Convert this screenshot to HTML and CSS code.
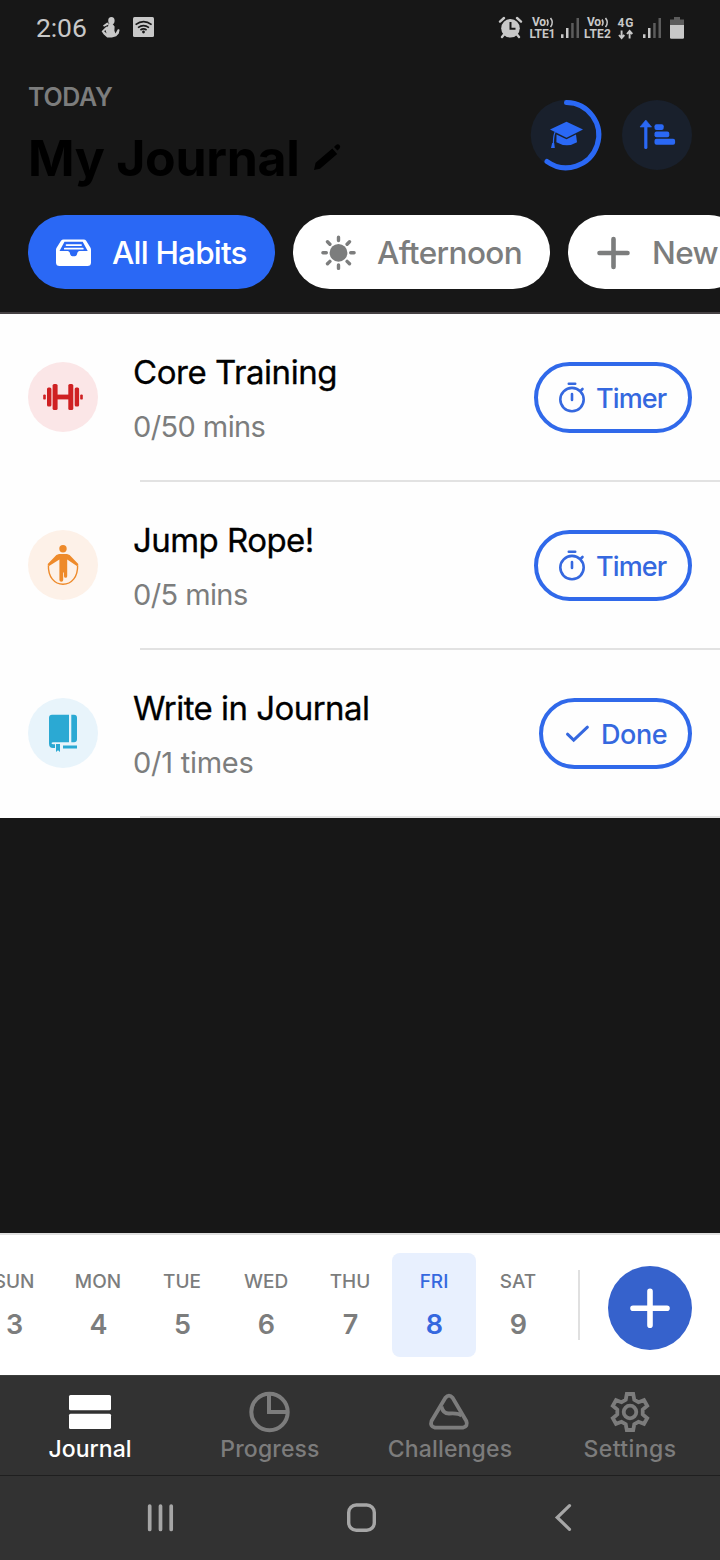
FILE: index.html
```html
<!DOCTYPE html>
<html lang="en">
<head>
<meta charset="utf-8">
<title>My Journal</title>
<link rel="stylesheet" href="styles.css">
</head>
<body>
<div class="app">
  <div class="status">
    <span class="clock">2:06</span>
    <svg class="status-left" width="60" height="56" viewBox="98 0 60 56">
      <g fill="#c8c8c8">
        <ellipse cx="111.4" cy="20.8" rx="3.2" ry="3.7"/>
        <path d="M103 25.600l4.200-3 1.600.8-.6 1.400-4.200 2zM108.600 24h4l2 2.400-.2 4.400 1 2.600 2.600-4.400 1.600.8-.8 3.800-2.600 2.600-4.400 1.400h-4.600l-3.600-3.400-2-3 4.600-4.400 1.800-.4zM105.400 30l-1.200 1.200 2.400 2.400z" fill-rule="evenodd"/>
        <rect x="133" y="17" width="21" height="20" rx="1.500"/>
      </g>
      <g fill="none" stroke="#181818" stroke-width="1.600">
        <path d="M135.600 24.600q8-6 16 0M138 27.600q5.500-4 11 0M140.400 30q3.100-2.200 6.200 0"/>
      </g>
      <circle cx="143.500" cy="32" r="1.400" fill="#181818"/>
    </svg>
    <svg class="status-right" width="190" height="56" viewBox="498 0 190 56">
      <circle cx="510.500" cy="28.300" r="9.300" fill="#c8c8c8"/>
      <path d="M500 21.600l4-3.600M521 21.600l-4-3.600M504 34.500l-2 2.500M517 34.500l2 2.500" stroke="#c8c8c8" stroke-width="2.400" stroke-linecap="round"/>
      <path d="M510.500 22v6.800h5" fill="none" stroke="#181818" stroke-width="2"/>
      <g class="status-label">
        <text x="532" y="26.300" textLength="14">Vo</text><text x="587" y="26.300" textLength="14">Vo</text>
        <text x="529.500" y="38" textLength="26">LTE1</text><text x="584" y="38" textLength="27">LTE2</text>
        <text x="617.500" y="26.800" textLength="16">4G</text>
      </g>
      <path d="M547 19.500q2 3 0 6.200M550.500 18q3.500 4.500 0 9M602 19.500q2 3 0 6.200M605.500 18q3.500 4.500 0 9" fill="none" stroke="#c8c8c8" stroke-width="1.600"/>
      <path d="M621.600 30.500v7M619 35l2.600 3 2.700-3M629.600 38.500v-7M627 34l2.600-3 2.700 3" fill="none" stroke="#c8c8c8" stroke-width="1.900"/>
      <path d="M561 34.300h2.500V38H561zM566 28h2.500v10H566zM643 34.300h2.500V38H643zM648 28h2.500v10H648z" fill="#c8c8c8"/>
      <path d="M571.200 23h2.500v15h-2.500zM576.500 18h2.500v20h-2.500zM653.200 23h2.500v15h-2.500zM658.500 18h2.500v20h-2.500z" fill="#5c5c5c"/>
      <path d="M670 25v-5.500h4V17h6v2.500h4V25z" fill="#5c5c5c"/>
      <path d="M670 25h14v12.500q0 1.300-1.300 1.300h-11.400q-1.300 0-1.300-1.300z" fill="#c8c8c8"/>
    </svg>
  </div>

  <header class="header">
    <div class="heading">
      <div class="eyebrow">TODAY</div>
      <div class="title-row">
        <h1 class="title">My Journal</h1>
        <svg width="30" height="30" viewBox="312 143 30 30"><path d="M314 170l1.600-7.300 16.700-14.300 4.900 5.500L320 168.800zM334 147l2-1.900q1.800-1.800 3.500 0 1.600 1.800-.1 3.600l-2 1.900z" fill="#000"/></svg>
      </div>
    </div>
    <div class="actions">
      <svg width="72" height="72" viewBox="530 99 72 72">
        <circle cx="566" cy="135" r="35.300" fill="#19202c"/>
        <path d="M566.500 102.500A32.600 32.600 0 1 1 547 161.500" fill="none" stroke="#2a68f5" stroke-width="5" stroke-linecap="round"/>
        <path d="M550 129.400l16.500-7.600 16.500 7.600-16.500 8.400z" fill="#2a68f5"/>
        <path d="M556.500 134.600l10 4.700 9.500-4.700 1 7.600q-10 6-20.600 0z" fill="#2a68f5"/>
        <path d="M555.200 132q-1.700 3-1.800 11" fill="none" stroke="#2a68f5" stroke-width="1.200"/>
        <path d="M552.200 143h2l.6 5h-3.800z" fill="#2a68f5"/>
      </svg>
      <svg width="70" height="72" viewBox="622 99 70 72">
        <circle cx="657" cy="135" r="35" fill="#19202c"/>
        <path d="M645.800 147.500v-23" stroke="#2a68f5" stroke-width="3.200" stroke-linecap="round"/>
        <path d="M640 127l5.800-7 5.800 7z" fill="#2a68f5" stroke="#2a68f5" stroke-width=".6"/>
        <g fill="#2a68f5"><rect x="654.500" y="124.200" width="9.200" height="5.800" rx="2"/><rect x="654.500" y="131.600" width="14.800" height="5.600" rx="2"/><rect x="654.500" y="138.800" width="20.600" height="6" rx="2"/></g>
      </svg>
    </div>
  </header>

  <nav class="chips">
    <div class="chip chip-active">
      <svg width="36" height="36" viewBox="56 234.500 36 36">
        <path fill-rule="evenodd" d="M63.500 239h20.200q1.600 0 2.500 1.200l4.300 7q.5 1 .5 2.300V262q0 3.600-3.600 3.600H59.600q-3.600 0-3.600-3.600v-12.500q0-1.300.6-2.300l4.400-7q.9-1.200 2.500-1.200zM64.500 241.300l-5 9.200h8.200q1.500 0 2 1.500l.6 2q.5 1.700 2 1.700h2.600q1.500 0 2-1.700l.6-2q.5-1.500 2-1.500h8.200l-5-9.200z" fill="#fff"/>
        <path d="M66.500 244.600h14.600M64.800 248.200h18" stroke="#fff" stroke-width="1.700" stroke-linecap="round"/>
      </svg>
      <span>All Habits</span>
    </div>
    <div class="chip chip-afternoon">
      <svg width="36" height="36" viewBox="321 234.500 36 36">
        <circle cx="338.500" cy="252.300" r="8.900" fill="#7c7d7d"/>
        <path d="M338.500 236.700v3.400M338.500 264.500v3.400M322.900 252.300h3.400M350.700 252.300h3.400M327.500 241.300l2.400 2.400M347.100 260.900l2.400 2.400M327.500 263.300l2.400-2.400M347.100 243.700l2.400-2.400" stroke="#7c7d7d" stroke-width="3.400" stroke-linecap="round"/>
      </svg>
      <span>Afternoon</span>
    </div>
    <div class="chip">
      <svg width="36" height="36" viewBox="596 234.500 36 36"><path d="M599.500 252.500h28M613.500 238.500v28" stroke="#7c7d7d" stroke-width="4.600" stroke-linecap="round"/></svg>
      <span>New</span>
    </div>
  </nav>

  <main class="list">
    <div class="habit">
      <svg class="avatar" width="70" height="70" viewBox="28 362 70 70">
        <circle cx="63" cy="397" r="35" fill="#fbe6e7"/>
        <g fill="#cf2022"><rect x="52.600" y="384" width="5" height="26" rx="1.600"/><rect x="68.300" y="384" width="5" height="26" rx="1.600"/><rect x="47" y="387.500" width="4.400" height="19" rx="1.500"/><rect x="74.700" y="387.500" width="4.400" height="19" rx="1.500"/><rect x="57" y="394.600" width="12" height="4.800"/><rect x="43.200" y="394.400" width="2.600" height="5.200" rx="1.200"/><rect x="80.200" y="394.400" width="2.600" height="5.200" rx="1.200"/></g>
      </svg>
      <div class="habit-text"><div class="habit-name">Core Training</div><div class="habit-goal">0/50 mins</div></div>
      <div class="pill">
        <svg class="pill-icon" width="30" height="36" viewBox="557 380 30 36"><g fill="none" stroke="#3568df"><circle cx="572" cy="399.600" r="11.700" stroke-width="2.600"/><path d="M568.800 383.700h6.400M572 394v6M580.500 391l2-2" stroke-width="2.600" stroke-linecap="round"/></g></svg>
        <span>Timer</span>
      </div>
    </div>
    <div class="habit">
      <svg class="avatar" width="70" height="70" viewBox="28 530 70 70">
        <circle cx="63" cy="565" r="35" fill="#fdf1e8"/>
        <circle cx="63" cy="548.700" r="3.700" fill="#ee8a2a"/>
        <path d="M59 554h8l2.600 1 8.900 9.200-1.600 1.800-9.700-6.600v16.800q0 1.600-1.600 1.600T64 576.200v-3.700h-.8v7.500q0 1.800-1.900 1.800t-1.900-1.800v-20.600l-10.300 6.600-1.600-1.800 8.900-9.200z" fill="#ee8a2a"/>
        <path d="M48.400 565.200C48 577 54.500 584.300 63 584.300S78 577 77.600 565.200" fill="none" stroke="#ee8a2a" stroke-width="1.400"/>
      </svg>
      <div class="habit-text"><div class="habit-name name-jump">Jump Rope!</div><div class="habit-goal">0/5 mins</div></div>
      <div class="pill">
        <svg class="pill-icon" width="30" height="36" viewBox="557 380 30 36"><g fill="none" stroke="#3568df"><circle cx="572" cy="399.600" r="11.700" stroke-width="2.600"/><path d="M568.800 383.700h6.400M572 394v6M580.500 391l2-2" stroke-width="2.600" stroke-linecap="round"/></g></svg>
        <span>Timer</span>
      </div>
    </div>
    <div class="habit">
      <svg class="avatar" width="70" height="70" viewBox="28 698 70 70">
        <circle cx="63" cy="733" r="35" fill="#e8f4fb"/>
        <g fill="#2ba9d3"><path d="M52 714.800h17v27.400H53.500q-2 0-2 1t2 1H55V748h-2q-4 0-4-4.500v-25.700q0-3 3-3z"/><path d="M71.300 714.800h2.700q3 0 3 3v21.400q0 3-3 3h-2.700zM56 744h4v8l-2-1.800-2 1.800zM63 745.400h14v3H63z"/></g>
      </svg>
      <div class="habit-text"><div class="habit-name name-write">Write in Journal</div><div class="habit-goal goal-times">0/1 times</div></div>
      <div class="pill pill-done">
        <svg class="pill-icon" width="30" height="36" viewBox="562 716 30 36"><path d="M567.500 734.200l6.200 6 13.700-13" fill="none" stroke="#3568df" stroke-width="3" stroke-linecap="round"/></svg>
        <span>Done</span>
      </div>
    </div>
  </main>

  <section class="calendar">
    <div class="days">
      <div class="day"><span>SUN</span><b>3</b></div>
      <div class="day"><span>MON</span><b>4</b></div>
      <div class="day"><span>TUE</span><b>5</b></div>
      <div class="day"><span>WED</span><b>6</b></div>
      <div class="day"><span>THU</span><b>7</b></div>
      <div class="day day-active"><span>FRI</span><b>8</b></div>
      <div class="day"><span>SAT</span><b>9</b></div>
    </div>
    <div class="divider"></div>
    <div class="fab"><svg width="84" height="84" viewBox="0 0 84 84"><path d="M25 42.300h34M42 25.300v34" stroke="#fff" stroke-width="5.600" stroke-linecap="round"/></svg></div>
  </section>

  <nav class="tabs">
    <div class="tab tab-active">
      <svg width="44" height="44" viewBox="68 1390 44 44"><rect x="69" y="1395" width="42" height="15.300" rx="1.500" fill="#fff"/><rect x="69" y="1413.700" width="42" height="15.300" rx="1.500" fill="#fff"/></svg>
      <span>Journal</span>
    </div>
    <div class="tab">
      <svg width="44" height="44" viewBox="248 1390 44 44"><circle cx="269.500" cy="1412" r="18.200" fill="none" stroke="#7c7c7c" stroke-width="4"/><path d="M269 1394v18h18.500" fill="none" stroke="#7c7c7c" stroke-width="4"/></svg>
      <span>Progress</span>
    </div>
    <div class="tab">
      <svg width="44" height="44" viewBox="428 1390 44 44"><g fill="none" stroke="#7c7c7c" stroke-width="3.800" stroke-linejoin="round"><path d="M445.400 1397.800q3.600-4.400 7.200 0L466.300 1421q2 5.400-3.400 6.700H435q-5.300-1.300-3.500-6.700z"/><path d="M441.400 1406.500q1.600 7.200 7.800 7 9.800-.7 12.500 2.500"/></g></svg>
      <span>Challenges</span>
    </div>
    <div class="tab tab-settings">
      <svg width="44" height="44" viewBox="-22 -22 44 44"><g fill="none" stroke="#7c7c7c" stroke-width="3.800"><circle r="6.300"/><path d="M-3.200-18H3.200L4.300-12.200 8.500-9.800 14-11.800 17.200-6.200 12.700-2.400V2.400L17.200 6.200 14 11.800 8.500 9.800 4.300 12.200 3.200 18H-3.200L-4.300 12.200-8.500 9.800-14 11.800-17.200 6.200-12.700 2.400V-2.400L-17.200-6.200-14-11.800-8.500-9.800-4.300-12.200z"/></g></svg>
      <span>Settings</span>
    </div>
  </nav>

  <div class="sysnav">
    <svg width="30" height="36" viewBox="146 1500 30 36"><path d="M149.700 1506v23.500M160.500 1506v23.500M171.200 1506v23.500" stroke="#a6a6a6" stroke-width="3.700" stroke-linecap="round"/></svg>
    <svg width="32" height="36" viewBox="348 1500 32 36"><rect x="348.700" y="1505" width="25.600" height="25.200" rx="7.500" fill="none" stroke="#a6a6a6" stroke-width="3.400"/></svg>
    <svg width="22" height="36" viewBox="552 1500 22 36"><path d="M569.500 1505.700l-12.300 11.800 12.300 11.800" fill="none" stroke="#a6a6a6" stroke-width="3.200" stroke-linecap="round"/></svg>
  </div>
</div>
</body>
</html>
```

FILE: styles.css
```css
* { box-sizing: border-box; }
body { margin: 0; background: #171717; font-family: Inter, "Liberation Sans", sans-serif; }
svg { display: block; flex: none; overflow: visible; }
.app { width: 720px; height: 1560px; display: flex; flex-direction: column; overflow: hidden; background: #171717; }

.status { height: 56px; display: flex; align-items: center; padding-left: 36px; }
.clock { width: 62px; font: 400 26.5px/56px Roboto, sans-serif; color: #c8c8c8; letter-spacing: -0.1px; }
.status-right { margin-left: 340px; }
.status-label { font: 700 12px Roboto, sans-serif; fill: #c8c8c8; }

.header { height: 159px; display: flex; justify-content: space-between; padding: 26px 28px 0; }
.eyebrow { font-size: 25px; line-height: 30px; font-weight: 600; color: #7c7d7d; letter-spacing: -0.3px; }
.title-row { display: flex; align-items: center; gap: 12px; margin-top: 16px; }
.title { margin: 0; font-size: 50px; line-height: 60px; font-weight: 700; color: #000; white-space: nowrap; letter-spacing: -0.3px; }
.actions { display: flex; gap: 20px; padding-top: 17px; }

.chips { height: 99px; display: flex; align-items: flex-start; gap: 18px; padding-left: 28px; border-bottom: 2px solid #454143; overflow: hidden; }
.chip { height: 74px; flex: none; display: flex; align-items: center; gap: 20px; padding: 1px 28px 0; border-radius: 37px; background: #fff; color: #7c7d7d; font-size: 31.5px; line-height: 40px; font-weight: 500; letter-spacing: -0.6px; white-space: nowrap; }
.chip-active { width: 247px; background: #2a68f5; color: #fff; letter-spacing: -0.8px; }
.chip-afternoon { width: 257px; }

.list { background: #fefefe; }
.habit { height: 168px; display: flex; align-items: center; padding: 0 28px 2px; background: linear-gradient(#e2e2e2, #e2e2e2) 140px 166px / 580px 2px no-repeat; }
.habit-text { flex: 1; margin-left: 35px; display: flex; flex-direction: column; gap: 15px; padding-top: 4px; }
.habit-name { font-size: 33px; line-height: 40px; color: #000; white-space: nowrap; letter-spacing: -0.45px; -webkit-text-stroke: 0.3px #000; }
.name-jump, .name-write { letter-spacing: -0.55px; }
.habit-goal { font-size: 29px; line-height: 40px; color: #7c7d7d; white-space: nowrap; letter-spacing: -0.6px; }
.goal-times { letter-spacing: -0.25px; }
.pill { width: 158px; height: 71px; display: flex; align-items: center; gap: 9px; padding-left: 19px; padding-top: 1px; border: 4px solid #3069ea; border-radius: 36px; color: #3568df; font-size: 27px; line-height: 34px; font-weight: 500; letter-spacing: -0.9px; }
.pill span { padding-top: 2px; }
.pill-done { width: 153px; letter-spacing: -0.4px; }

.calendar { margin-top: auto; height: 142px; flex: none; display: flex; align-items: flex-start; background: #fff; border-top: 2px solid #e0e0e0; }
.days { display: flex; width: 560px; padding-top: 18px; justify-content: flex-end; overflow: hidden; flex: none; }
.day { width: 84px; height: 104px; flex: none; display: flex; flex-direction: column; align-items: center; padding: 17px 0 0 1px; gap: 18px; border-radius: 8px; color: #7c7d7d; }
.day span { font-size: 19px; line-height: 24px; font-weight: 500; margin-left: -1px; }
.day b { font-size: 27px; line-height: 26px; font-weight: 600; }
.day-active { background: #e8f0fe; color: #3568df; }
.divider { width: 2px; height: 70px; margin: 35px 28px 0 18px; background: #e0e0e0; }
.fab { width: 84px; height: 84px; margin-top: 31px; border-radius: 50%; background: #3662cc; }

.tabs { height: 101px; flex: none; display: flex; background: #323232; border-top: 1px solid #3c3e3c; border-bottom: 1px solid #1f1f1f; }
.tab { width: 180px; display: flex; flex-direction: column; align-items: center; padding-top: 14px; color: #7c7c7c; font-size: 23px; line-height: 30px; font-weight: 500; letter-spacing: 0.15px; }
.tab-settings { letter-spacing: 0.4px; }
.tab-active { color: #fff; letter-spacing: 0.05px; }

.sysnav { height: 84px; flex: none; display: flex; padding: 24px 146px 0; justify-content: space-between; background: #323232; }
```
